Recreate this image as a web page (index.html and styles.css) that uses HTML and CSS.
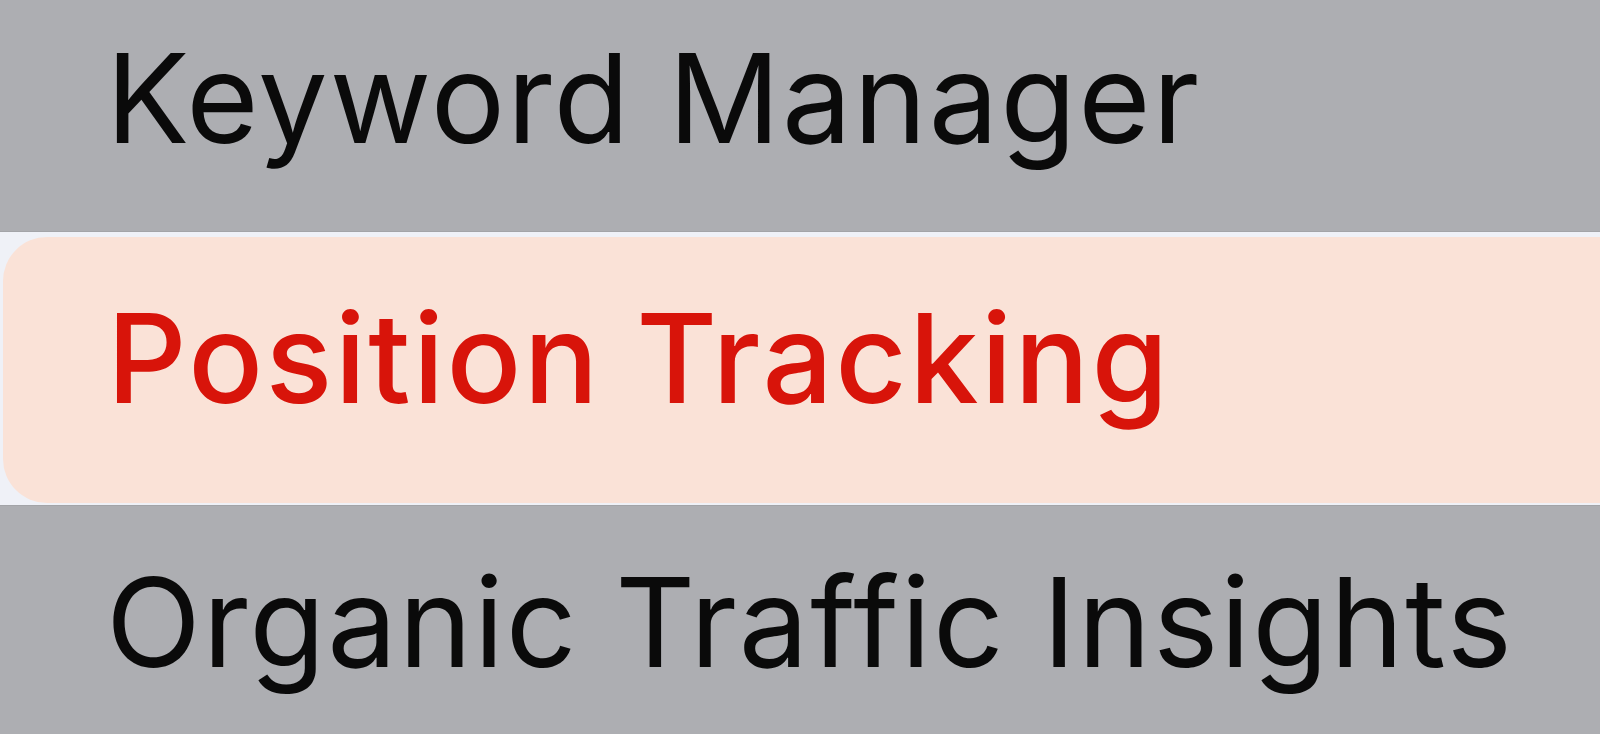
FILE: index.html
```html
<!DOCTYPE html>
<html lang="en">
<head>
    <meta charset="UTF-8">
    <meta name="viewport" content="width=device-width, initial-scale=1.0">
    <title>Menu</title>
    <link rel="stylesheet" href="styles.css">
</head>
<body>
<nav class="menu">
    <a class="item item-dim item-first">Keyword Manager</a>
    <a class="item item-active">Position Tracking</a>
    <a class="item item-dim item-last">Organic Traffic Insights</a>
</nav>
</body>
</html>
```

FILE: styles.css
```css
* { margin: 0; padding: 0; box-sizing: border-box; }
html, body { height: 100%; }
body { background: #eff1f7; overflow: hidden; font-family: Inter, "Noto Sans", sans-serif; }
.menu { display: flex; flex-direction: column; margin-top: -34px; }
.item { display: block; height: 266px; padding-left: 106px; font-size: 124px; line-height: 1; letter-spacing: 1.9px; white-space: nowrap; text-decoration: none; color: #0a0a0a; }
.item-dim { background: #adaeb2; }
.item-first { padding-top: 70px; border-bottom: 1px solid #a3a4a8; }
.item-active { margin: 5px 0 2px 3px; padding-top: 59px; padding-left: 104px; background: #fae2d7; color: #d8140a; font-weight: 500; letter-spacing: 2.4px; border-radius: 44px 0 0 44px; }
.item-last { height: 229px; padding-top: 54px; border-top: 1px solid #a3a4a8; }
```
